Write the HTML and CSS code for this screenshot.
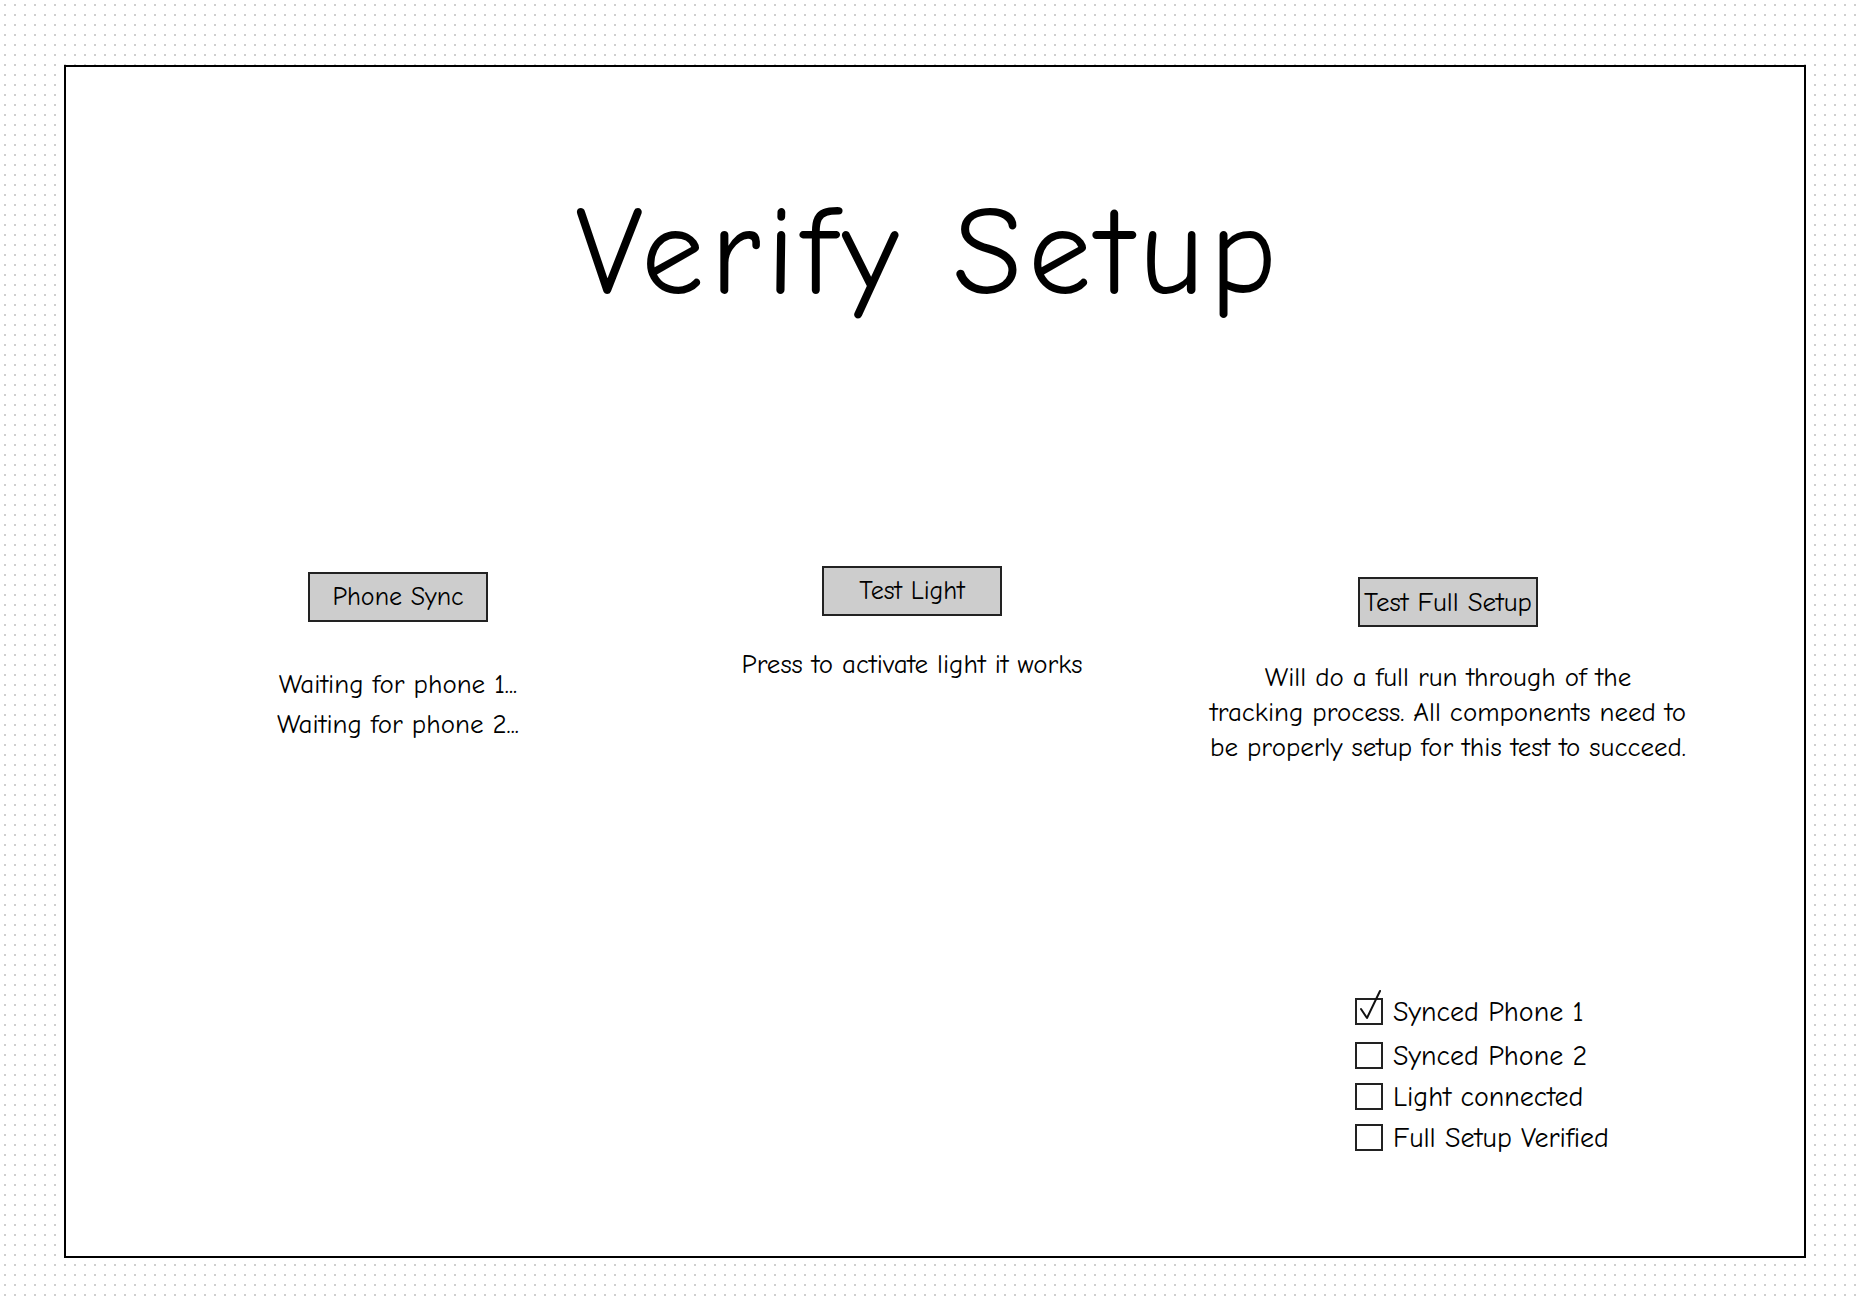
FILE: index.html
```html
<!DOCTYPE html>
<html lang="en">
  <head>
    <meta charset="UTF-8" />
    <meta name="viewport" content="width=device-width, initial-scale=1.0" />
    <title>Verify Setup</title>
    <link rel="stylesheet" href="styles.css">
  </head>
  <body>
    <div class="frame">
      <h1 class="title">Verify Setup</h1>

      <div class="steps">
        <div class="step step-phone">
          <button class="button">Phone Sync</button>
          <p class="note note-phone">Waiting for phone 1...<br />Waiting for phone 2...</p>
        </div>
        <div class="step step-light">
          <button class="button">Test Light</button>
          <p class="note note-light">Press to activate light it works</p>
        </div>
        <div class="step step-full">
          <button class="button">Test Full Setup</button>
          <p class="note note-full">Will do a full run through of the<br />tracking process. All components need to<br />be properly setup for this test to succeed.</p>
        </div>
      </div>

      <ul class="checklist">
        <li class="check-row first">
          <span class="box checked">
            <svg class="tick" viewBox="0 0 40 40" width="40" height="40">
              <path d="M8 21 L14 30 L27 3" fill="none" stroke="#111" stroke-width="2" stroke-linecap="round" stroke-linejoin="round" />
            </svg>
          </span>
          Synced Phone 1
        </li>
        <li class="check-row"><span class="box"></span>Synced Phone 2</li>
        <li class="check-row"><span class="box"></span>Light connected</li>
        <li class="check-row"><span class="box"></span>Full Setup Verified</li>
      </ul>
    </div>
  </body>
</html>
```

FILE: styles.css
```css
body {
  margin: 0;
  padding: 65px 0 0 64px;
  font-family: "Comic Sans MS", "Comic Neue", Lato, sans-serif;
  color: #000;
  background-color: #fff;
  background-image: radial-gradient(#cfcfcf 1.2px, transparent 1.4px);
  background-size: 10px 10px;
  height: 1298px;
  box-sizing: border-box;
  overflow: hidden;
}
.frame {
  width: 1742px;
  height: 1193px;
  box-sizing: border-box;
  border: 2px solid #000;
  background: #fff;
  display: flex;
  flex-direction: column;
}
.title {
  margin: 111px 12px 0 0;
  font-size: 126px;
  line-height: 150px;
  font-weight: normal;
  text-align: center;
  letter-spacing: 6px;
}
.steps {
  display: grid;
  grid-template-columns: 520px 508px 564px;
  padding-left: 72px;
  margin-top: 238px;
  align-items: start;
}
.step {
  display: flex;
  flex-direction: column;
  align-items: center;
}
.button {
  width: 180px;
  height: 50px;
  padding: 0;
  border: 2px solid #222;
  background-color: #cdcdcd;
  font-family: inherit;
  font-size: 26px;
  color: #000;
  white-space: nowrap;
}
.step-phone .button {
  margin-top: 6px;
}
.step-full .button {
  margin-top: 11px;
  font-size: 27px;
}
.note {
  margin: 0;
  font-size: 27px;
  text-align: center;
}
.note-phone {
  margin-top: 43px;
  line-height: 40px;
}
.note-light {
  margin-top: 31px;
  line-height: 36px;
}
.note-full {
  margin-top: 33px;
  line-height: 35px;
  white-space: nowrap;
}
.checklist {
  list-style: none;
  margin: auto 0 98px 1289px;
  padding: 0;
}
.check-row {
  display: flex;
  align-items: center;
  height: 41px;
  font-size: 28px;
}
.check-row.first {
  margin-bottom: 3px;
}
.box {
  position: relative;
  width: 28px;
  height: 27px;
  box-sizing: border-box;
  border: 2px solid #222;
  margin-right: 10px;
  flex-shrink: 0;
}
.tick {
  position: absolute;
  left: -4px;
  top: -12px;
}
```
